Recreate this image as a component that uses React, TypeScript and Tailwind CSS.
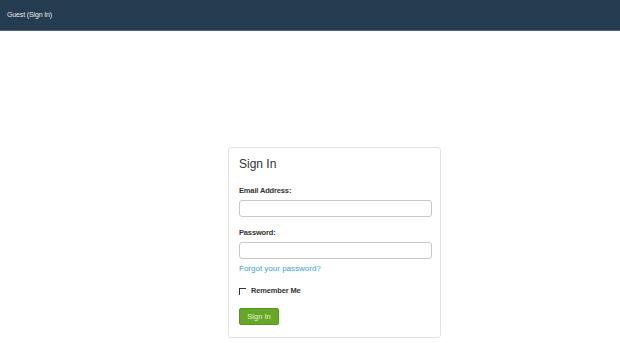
export default function App() {
  return (
    <div className="w-[620px] h-[343px] bg-white overflow-hidden" style={{ fontFamily: '"Liberation Sans", Arial, sans-serif' }}>
      <div className="h-[31px] bg-[#263c50] border-b border-[#52657a] flex items-center pl-[7px]">
        <span className="text-[7px] tracking-[-0.02em] text-[#e6ebef]">Guest (Sign In)</span>
      </div>
      <div className="flex justify-center pt-[116px] pl-[49px]">
        <div className="w-[213px] h-[191px] border border-[#e2e2e2] rounded-[3px] pl-[10px] pr-[10px] pt-[8px] flex flex-col">
          <div className="text-[12px] text-[#333] leading-[16px]">Sign In</div>
          <div className="mt-[14px] text-[7.5px] tracking-[-0.02em] font-bold text-[#333] leading-[10px]">Email Address:</div>
          <div className="mt-[4px] h-[17px] w-[193px] border border-[#c8c8c8] rounded-[3px] bg-white"></div>
          <div className="mt-[11px] text-[7.5px] tracking-[-0.02em] font-bold text-[#333] leading-[10px]">Password:</div>
          <div className="mt-[4px] h-[17px] w-[193px] border border-[#c8c8c8] rounded-[3px] bg-white"></div>
          <div className="mt-[4px] text-[8px] text-[#3a9fd9] leading-[11px]">Forgot your password?</div>
          <div className="mt-[12px] flex items-center gap-[5px]">
            <div className="w-[7px] h-[7px] border-l border-t border-[#333] mt-[1px]"></div>
            <span className="text-[7.5px] tracking-[-0.02em] font-bold text-[#333] leading-[10px]">Remember Me</span>
          </div>
          <div className="mt-[12px] w-[40px] h-[17px] rounded-[2px] bg-[#67a727] border border-[#5a961f] flex items-center justify-center">
            <span className="text-[7.5px] text-[#e4f2d6]">Sign In</span>
          </div>
        </div>
      </div>
    </div>
  );
}
